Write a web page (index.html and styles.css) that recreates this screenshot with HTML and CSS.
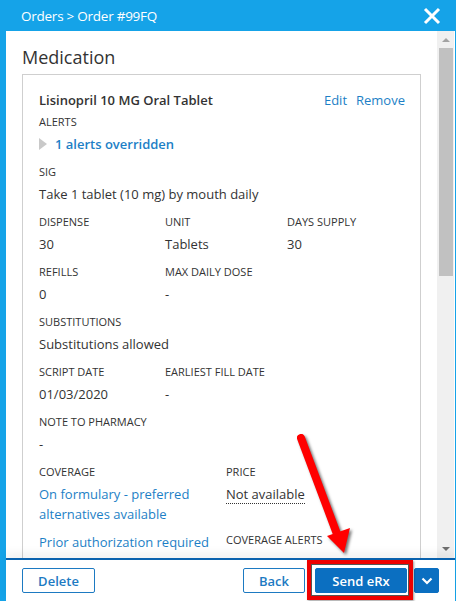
FILE: index.html
```html
<!DOCTYPE html>
<html>
<head>
<meta charset="utf-8">
<link rel="stylesheet" href="styles.css">
</head>
<body>
<div class="app">
  <header class="topbar">
    <div class="crumb">Orders &gt; Order #99FQ</div>
    <svg class="close" width="18" height="18" viewBox="0 0 18 18"><path d="M2 2 L16 16 M16 2 L2 16" stroke="#fff" stroke-width="3" fill="none"/></svg>
  </header>
  <div class="panel">
    <div class="scroller">
      <div class="content">
        <h1 class="title">Medication</h1>
        <div class="card">
          <div class="name-row">
            <div class="name">Lisinopril 10 MG Oral Tablet</div>
            <div class="actions"><a class="link">Edit</a><a class="link">Remove</a></div>
          </div>
          <div class="field">
            <div class="label">ALERTS</div>
            <div class="value alert"><span class="tri"></span><span class="link strong">1 alerts overridden</span></div>
          </div>
          <div class="field">
            <div class="label">SIG</div>
            <div class="value">Take 1 tablet (10 mg) by mouth daily</div>
          </div>
          <div class="grid3">
            <div class="field"><div class="label">DISPENSE</div><div class="value">30</div></div>
            <div class="field"><div class="label">UNIT</div><div class="value">Tablets</div></div>
            <div class="field"><div class="label">DAYS SUPPLY</div><div class="value">30</div></div>
            <div class="field"><div class="label">REFILLS</div><div class="value">0</div></div>
            <div class="field"><div class="label">MAX DAILY DOSE</div><div class="value">-</div></div>
            <div class="field"></div>
          </div>
          <div class="field">
            <div class="label">SUBSTITUTIONS</div>
            <div class="value">Substitutions allowed</div>
          </div>
          <div class="grid3">
            <div class="field"><div class="label">SCRIPT DATE</div><div class="value">01/03/2020</div></div>
            <div class="field"><div class="label">EARLIEST FILL DATE</div><div class="value">-</div></div>
            <div class="field"></div>
          </div>
          <div class="field">
            <div class="label">NOTE TO PHARMACY</div>
            <div class="value">-</div>
          </div>
          <div class="grid2">
            <div class="field cov"><div class="label">COVERAGE</div><div class="value link">On formulary - preferred alternatives available</div></div>
            <div class="field cov"><div class="label">PRICE</div><div class="value"><span class="dotted">Not available</span></div></div>
            <div class="field"><div class="value link">Prior authorization required</div></div>
            <div class="field"><div class="label">COVERAGE ALERTS</div></div>
          </div>
        </div>
      </div>
      <div class="scrollbar">
        <div class="sb-up"></div>
        <div class="sb-thumb"></div>
        <div class="sb-track"></div>
        <div class="sb-down"></div>
      </div>
    </div>
    <footer class="footer">
      <button class="btn outline">Delete</button>
      <div class="spacer"></div>
      <button class="btn outline">Back</button>
      <button class="btn solid send">Send eRx<span class="highlight"></span></button>
      <button class="btn solid drop"><svg width="12" height="8" viewBox="0 0 12 8"><path d="M1.5 1.5 L6 6 L10.5 1.5" stroke="#fff" stroke-width="2.2" fill="none"/></svg></button>
    </footer>
  </div>
  <svg class="arrow" width="456" height="601" viewBox="0 0 456 601">
    <line x1="301" y1="438" x2="337" y2="534" stroke="#f00" stroke-width="8" stroke-linecap="round"/>
    <polygon points="327,536 350,528 344,553" fill="#f00"/>
  </svg>
</div>
</body>
</html>
```

FILE: styles.css
```css
* { box-sizing: border-box; }
html, body { margin: 0; padding: 0; }
body {
  width: 456px;
  height: 601px;
  overflow: hidden;
  background: #15a3e8;
  font-family: "Open Sans", "Noto Sans", sans-serif;
  color: #333;
}
.app {
  position: relative;
  width: 456px;
  height: 601px;
  display: flex;
  flex-direction: column;
}
.topbar {
  height: 31px;
  display: flex;
  align-items: center;
  justify-content: space-between;
  padding: 0 15px 0 21px;
  color: #fff;
}
.crumb { font-size: 13.5px; letter-spacing: -0.25px; }
.close { display: block; }
.panel {
  flex: 1;
  margin: 0 1px 0 6px;
  background: #fff;
  display: flex;
  flex-direction: column;
  min-height: 0;
}
.scroller {
  height: 527px;
  display: flex;
  overflow: hidden;
}
.content {
  flex: 1;
  padding: 14px 10px 0 16px;
  overflow: hidden;
}
.title {
  margin: 0 0 5px 0;
  font-size: 18px;
  font-weight: 400;
  line-height: 24px;
  color: #333;
}
.card {
  border: 1px solid #cfcfcf;
  padding: 15px 15px 20px 16px;
  width: 399px;
}
.name-row {
  display: flex;
  justify-content: space-between;
  align-items: center;
  height: 20px;
  margin-bottom: 4px;
}
.name { font-size: 13px; font-weight: 600; }
.actions { display: flex; gap: 9px; font-size: 13px; }
.link { color: #1d7fc6; }
.strong { font-weight: 600; }
.field { margin-bottom: 10px; }
.label {
  font-size: 11px;
  line-height: 16px;
  height: 16px;
  margin-bottom: 4px;
  text-transform: uppercase;
  white-space: nowrap;
}
.value {
  font-size: 13px;
  line-height: 20px;
}
.alert { display: flex; align-items: center; gap: 8px; }
.tri {
  width: 0; height: 0;
  border-top: 6px solid transparent;
  border-bottom: 6px solid transparent;
  border-left: 8px solid #c9c9c9;
}
.grid3 {
  display: grid;
  grid-template-columns: 126px 122px 1fr;
}
.grid2 {
  display: grid;
  grid-template-columns: 187px 1fr;
}
.cov { margin-bottom: 8px; }
.dotted { border-bottom: 1px dotted #333; }
.scrollbar {
  width: 17px;
  margin-right: 1px;
  background: #f0f0f0;
  display: flex;
  flex-direction: column;
  align-items: center;
}
.sb-up {
  margin-top: 7px;
  width: 0; height: 0;
  border-left: 4px solid transparent;
  border-right: 4px solid transparent;
  border-bottom: 4px solid #a3a3a3;
}
.sb-thumb {
  margin-top: 6px;
  width: 14px;
  height: 228px;
  background: #c1c1c1;
}
.sb-track { flex: 1; }
.sb-down {
  margin-bottom: 7px;
  width: 0; height: 0;
  border-left: 4px solid transparent;
  border-right: 4px solid transparent;
  border-top: 4px solid #6e6e6e;
}
.footer {
  position: relative;
  flex: 1;
  border-top: 2px solid #0a62ae;
  box-shadow: 0 -6px 8px rgba(0,0,0,0.05);
  display: flex;
  align-items: flex-start;
  padding: 8px 16px 0 16px;
  gap: 10px;
  background: #fff;
}
.spacer { flex: 1; }
.btn {
  height: 25px;
  border-radius: 2px;
  font-family: "Open Sans", "Noto Sans", sans-serif;
  font-size: 13px;
  font-weight: 600;
  padding: 0;
  cursor: pointer;
}
.outline {
  background: #fff;
  color: #1d7ac2;
  border: 1px solid #1d7ac2;
}
.footer .outline:first-child { width: 73px; }
.footer .outline:nth-child(3) { width: 62px; }
.solid {
  background: #0b6fc1;
  color: #fff;
  border: 1px solid #0b6fc1;
}
.send { position: relative; width: 92px; }
.drop {
  width: 25px;
  margin-left: -3px;
  display: flex;
  align-items: center;
  justify-content: center;
}
.highlight {
  position: absolute;
  left: -9px;
  top: -9px;
  right: -7px;
  bottom: -8px;
  border: 4px solid #ee0000;
  box-shadow: inset 0 0 0 1px #555, 1px 1px 2px rgba(0,0,0,0.4);
  pointer-events: none;
}
.arrow {
  position: absolute;
  left: 0;
  top: 0;
  pointer-events: none;
  filter: drop-shadow(2px 2px 1.5px rgba(0,0,0,0.55));
}
```
